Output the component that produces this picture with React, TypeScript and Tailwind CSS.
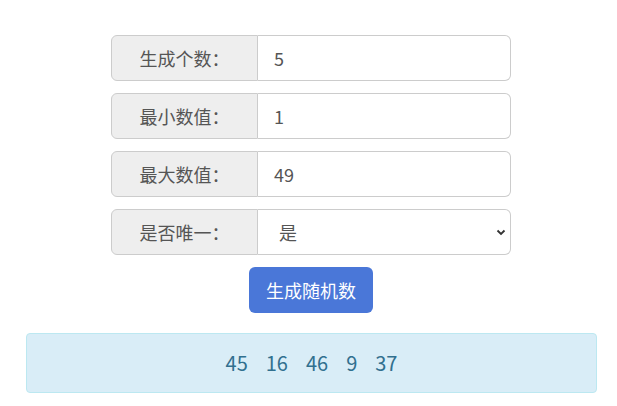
import React from "react";

const font = { fontFamily: '"Noto Sans CJK SC", "Noto Sans", sans-serif' };

function Row({ label, children }: { label: string; children: React.ReactNode }) {
  return (
    <div className="flex h-[46px] w-[400px]">
      <div className="flex w-[147px] shrink-0 items-center justify-center rounded-l-[6px] border border-[#ccc] bg-[#eee] text-[18px] text-[#555]">
        {label}
      </div>
      <div className="flex flex-1 items-center rounded-r-[6px] border border-l-0 border-[#ccc] bg-white text-[18px] text-[#555]">
        {children}
      </div>
    </div>
  );
}

export default function App() {
  return (
    <div className="min-h-[406px] bg-white" style={font}>
      <div className="ml-[26px] w-[571px] pt-[35px]">
        <div className="ml-[85px] flex w-[400px] flex-col items-center gap-[12px]">
          <Row label="生成个数：">
            <span className="pl-[16px]">5</span>
          </Row>
          <Row label="最小数值：">
            <span className="pl-[16px]">1</span>
          </Row>
          <Row label="最大数值：">
            <span className="pl-[16px]">49</span>
          </Row>
          <Row label="是否唯一：">
            <div className="flex w-full items-center justify-between pl-[21px] pr-[4px]">
              <span>是</span>
              <svg width="10" height="10" viewBox="0 0 10 10">
                <path d="M1.5 3.5 L5 7 L8.5 3.5" fill="none" stroke="#333" strokeWidth="1.8" />
              </svg>
            </div>
          </Row>
          <button className="h-[46px] w-[124px] rounded-[6px] bg-[#4a77d8] text-[18px] text-white">
            生成随机数
          </button>
        </div>
        <div className="mt-[20px] flex h-[60px] items-center justify-center gap-[18px] rounded-[4px] border border-[#bce8f1] bg-[#d9edf7] text-[20px] text-[#31708f]">
          <span>45</span>
          <span>16</span>
          <span>46</span>
          <span>9</span>
          <span>37</span>
        </div>
      </div>
    </div>
  );
}
